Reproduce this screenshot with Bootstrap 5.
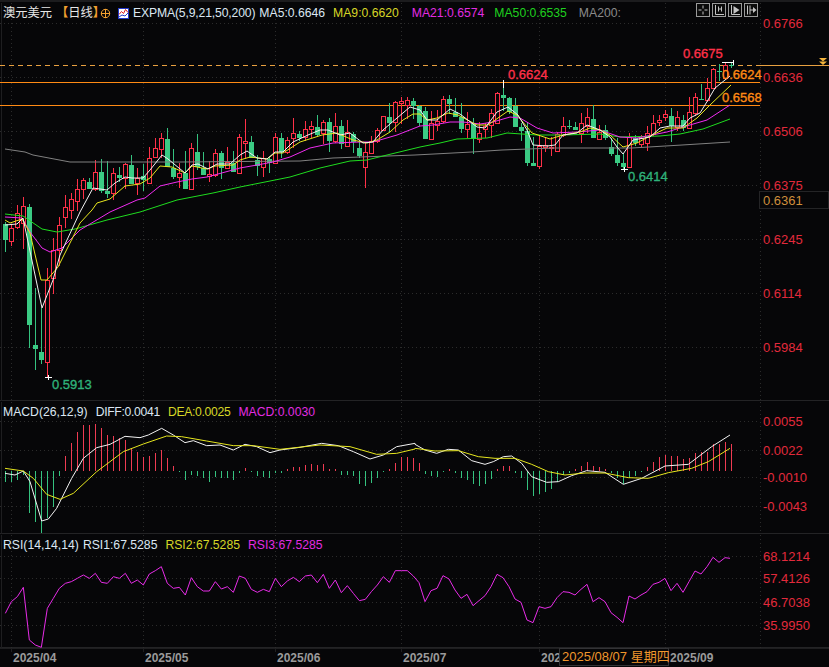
<!DOCTYPE html>
<html lang="zh">
<head>
<meta charset="utf-8">
<title>澳元美元 日线</title>
<link href="https://cdn.jsdelivr.net/npm/bootstrap@5.3.0/dist/css/bootstrap.min.css" rel="stylesheet">
<style>
html,body{margin:0;background:#060608;overflow:hidden}
body{font-family:"Liberation Sans","Noto Sans CJK SC",sans-serif;font-size:12.2px;line-height:1}
.terminal{width:829px;height:667px;background:#060608;color:#d8e4f0}
.pane{border-bottom:1px solid #232325}
.pane-main{height:401px;border-top:2px solid #1c1c1e}
.pane-macd{height:133px}
.pane-rsi{height:114px}
.pane-time{height:19px}
.plot{display:block;position:absolute;left:0;top:0}
.legend-row{position:absolute;left:3px;top:3px;height:16px;white-space:nowrap}
.title-cn{color:#e6e6e6;font-size:12.25px}
.title-bracket{margin-right:-5px;font-weight:700}
.expma-ico{margin-left:7px}
.tight-a{letter-spacing:-.15px}
.tight-b{letter-spacing:-.32px}
.gap-ma21{margin-left:13px}
.gap-ma50{margin-left:10px}
.gap-ma200{margin-left:12px}
.c-orange{color:#f0a030}
.c-white{color:#dbe6f2}
.c-yellow{color:#d6d626}
.c-magenta{color:#e22ce2}
.c-green{color:#1fd01f}
.c-gray{color:#8a8a8a}
.tool-row{position:absolute;left:696px;top:1px;gap:2px}
.tool-ico{display:block;width:14px;height:14px}
.ico-box{fill:#0b0b0b;stroke:#9a9a9a;stroke-width:1}
.ico-ink{fill:none;stroke:#c4c4c4;stroke-width:1}
.ico-fill{fill:#c4c4c4}
.plot text{font-family:"Liberation Sans","Noto Sans CJK SC",sans-serif;font-size:13px}
.ax{fill:#e22a3c}
.lab-red{fill:#ff3048;stroke:#ff3048;stroke-width:.35px}
.lab-org{fill:#ff8a14;stroke:#ff8a14;stroke-width:.35px}
.lab-grn{fill:#2fb27a;stroke:#2fb27a;stroke-width:.35px}
.grid{stroke:#2b2b2b;stroke-width:1;stroke-dasharray:1 3;shape-rendering:crispEdges}
.edge{stroke:#1e1e20;stroke-width:1;shape-rendering:crispEdges}
.hl-solid{stroke:#ff8a14;stroke-width:1;shape-rendering:crispEdges}
.hl-dash{stroke:#e8a040;stroke-width:1;stroke-dasharray:5 4;shape-rendering:crispEdges}
.hl-tail{stroke:#e8a040;stroke-width:1;shape-rendering:crispEdges}
.wick-g{stroke:#35c27f;stroke-width:1;shape-rendering:crispEdges}
.wick-r{stroke:#ff3048;stroke-width:1;shape-rendering:crispEdges}
.body-g{fill:#3bcb84;shape-rendering:crispEdges}
.body-r{fill:#060608;stroke:#ff3048;stroke-width:1;shape-rendering:crispEdges}
.ln{fill:none;stroke-width:1;stroke-linejoin:round}
.ln-w{stroke:#f2f2f2}
.ln-y{stroke:#e6e61e}
.ln-m{stroke:#f02cf0}
.ln-g{stroke:#1fdc1f}
.ln-s{stroke:#808080}
.ln-r{stroke:#e82ce8}
.cross{stroke:#fff;stroke-width:1;shape-rendering:crispEdges}
.bar-g{stroke:#35c27f;stroke-width:1;shape-rendering:crispEdges}
.bar-r{stroke:#ef3b52;stroke-width:1;shape-rendering:crispEdges}
.mark{fill:#f2b33c}
.price-box{fill:#060608;stroke:#242426;shape-rendering:crispEdges}
.price-txt{fill:#cf8f3c}
.plot text.date{fill:#9a9a9a;font-weight:700;font-size:12px}
.date-box{fill:#060608;stroke:#333336;shape-rendering:crispEdges}
.date-cur{fill:#f0962c}
</style>
</head>
<body>
<div class="terminal d-flex flex-column">
  <section class="pane pane-main position-relative">
    <svg class="plot" id="pMain" width="829" height="401" viewBox="0 2 829 401"></svg>
    <div class="legend-row d-flex align-items-center">
      <span class="title-cn">澳元美元</span>
      <span class="title-cn c-orange title-bracket ms-1">【<span class="title-cn fw-normal">日线</span>】</span>
      <svg width="11" height="11" viewBox="0 0 11 11"><circle cx="5.5" cy="5.5" r="4.2" fill="none" stroke="#f0a030"/><path d="M1 5.500h9M5.500 1v9" stroke="#f0a030"/></svg>
      <svg class="expma-ico" width="11" height="11" viewBox="0 0 11 11"><rect x=".5" y=".5" width="10" height="10" fill="#fff" stroke="#2238c8"/><path d="M1 6.500l2.500-3 2 2 2-4 2.500 3" fill="none" stroke="#e02020"/><path d="M1 9l3-2 3 1 3-3" fill="none" stroke="#2238c8"/></svg>
      <span class="c-white tight-a ms-1">EXPMA(5,9,21,50,200)</span>
      <span class="c-white ms-1">MA5:0.6646</span>
      <span class="c-yellow ms-2">MA9:0.6620</span>
      <span class="c-magenta gap-ma21">MA21:0.6574</span>
      <span class="c-green gap-ma50">MA50:0.6535</span>
      <span class="c-gray gap-ma200">MA200:</span>
    </div>
    <div class="tool-row d-flex">
      <svg class="tool-ico" viewBox="0 0 14 14"><rect class="ico-box" x=".5" y=".5" width="13" height="13"/><path class="ico-ink" d="M7 2.500v3M7 8.500v3M2.500 7h3M8.500 7h3"/></svg>
      <svg class="tool-ico" viewBox="0 0 14 14"><rect class="ico-box" x=".5" y=".5" width="13" height="13"/><path class="ico-ink" d="M3.500 2v9.500H12M6.500 3.500v5M9.500 3.500v5M6.500 6h3"/></svg>
      <svg class="tool-ico" viewBox="0 0 14 14"><rect class="ico-box" x=".5" y=".5" width="13" height="13"/><path class="ico-ink" d="M3.500 2v9.500H12"/><path class="ico-fill" d="M5.500 3l6 4-6 4z"/></svg>
      <svg class="tool-ico" viewBox="0 0 14 14"><rect class="ico-box" x=".5" y=".5" width="13" height="13"/><path class="ico-ink" d="M3.500 2.500v9M6 2.500v9M6 7h4"/><path class="ico-fill" d="M9 4l3.500 3L9 10z"/></svg>
    </div>
  </section>
  <section class="pane pane-macd position-relative">
    <svg class="plot" id="pMacd" width="829" height="133" viewBox="0 401 829 133"></svg>
    <div class="legend-row d-flex align-items-center">
      <span class="c-white">MACD(26,12,9)</span>
      <span class="c-white tight-b ms-2">DIFF:0.0041</span>
      <span class="c-yellow tight-b ms-2">DEA:0.0025</span>
      <span class="c-magenta ms-2">MACD:0.0030</span>
    </div>
  </section>
  <section class="pane pane-rsi position-relative">
    <svg class="plot" id="pRsi" width="829" height="114" viewBox="0 534 829 114"></svg>
    <div class="legend-row d-flex align-items-center">
      <span class="c-white">RSI(14,14,14)</span>
      <span class="c-white ms-1">RSI1:67.5285</span>
      <span class="c-yellow ms-2">RSI2:67.5285</span>
      <span class="c-magenta ms-2">RSI3:67.5285</span>
    </div>
  </section>
  <section class="pane-time position-relative">
    <svg class="plot" id="pTime" width="829" height="19" viewBox="0 648 829 19"></svg>
  </section>
</div>
<script>
const NS='http://www.w3.org/2000/svg';
function el(p,t,a,tx){const e=document.createElementNS(NS,t);for(const k in a)e.setAttribute(k,a[k]);if(tx!==undefined)e.textContent=tx;p.appendChild(e);return e}
const line=(p,c,x1,y1,x2,y2)=>el(p,'line',{class:c,x1,y1,x2,y2});
const text=(p,c,x,y,s)=>el(p,'text',{class:c,x,y},s);
const poly=(p,c,pts)=>el(p,'polyline',{class:'ln '+c,points:pts.map(q=>q.join(',')).join(' ')});
const vx=[11.5,143.5,275.5,401.5,539.5,665.5];
const main=document.getElementById('pMain'),macd=document.getElementById('pMacd'),rsi=document.getElementById('pRsi'),tm=document.getElementById('pTime');
function frame(p,top,bot,levels){
  vx.forEach(x=>line(p,'grid',x,top,x,bot));
  line(p,'grid',760.5,top,760.5,bot);
  line(p,'edge',1.5,top,1.5,bot);
  levels.forEach(l=>{line(p,'grid',0,l[1]+.5,760,l[1]+.5);text(p,'ax',763,l[1]+4.5,l[0])});
}
frame(main,3,401,[['0.6766',23],['0.6636',77],['0.6506',131],['0.6375',185],['0.6245',239],['0.6114',293],['0.5984',347]]);
frame(macd,402,534,[['0.0055',421],['0.0022',450],['-0.0010',477],['-0.0043',506]]);
frame(rsi,535,648,[['68.1214',556],['57.4126',578],['46.7038',602],['35.9950',625]]);
/* horizontal levels */
line(main,'hl-dash',0,65.5,760,65.5);line(main,'hl-tail',760,65.5,829,65.5);
line(main,'hl-solid',0,82.5,760,82.5);line(main,'hl-solid',0,105.5,760,105.5);
el(main,'polygon',{class:'mark',points:'819,58 827,58 823,61.500'});
el(main,'polygon',{class:'mark',points:'819,61.500 827,61.500 823,65'});
/* candles: colour, high, body top, body bottom, low */
const K='g222,224,240,251 r224,228,241,245 r205,213,227,228 r197,206,223,248 g204,207,325,347 g288,345,349,369 g308,352,360,363 r268,280,362,377 r238,250,278,293 r217,225,250,265 r195,207,217,227 r193,199,210,218 r179,189,201,210 r178,180,189,198 g178,182,189,189 r160,172,189,190 g159,172,191,192 g161,191,194,197 r168,173,193,199 g167,175,178,181 r163,164,178,188 g155,165,184,184 r168,178,183,194 g164,176,180,190 r147,158,183,183 r138,148,157,157 r133,138,149,157 g128,139,167,167 g149,168,177,178 r163,173,177,187 g151,173,189,189 r143,148,189,189 g134,152,167,169 g152,168,175,175 r161,174,176,181 r149,153,175,176 g151,153,168,178 r147,162,168,168 g151,163,172,172 r134,137,173,173 r119,141,143,158 g136,142,158,158 g155,160,166,175 r151,158,167,176 g157,159,163,172 r133,137,163,163 g133,138,152,157 r137,140,152,153 r118,133,138,147 g131,134,138,140 r121,129,137,140 r121,126,129,137 g115,127,135,136 r120,122,133,143 g118,122,141,151 r113,126,141,142 g120,126,144,148 r120,132,146,146 g132,134,142,152 g142,148,156,157 r142,152,167,187 r136,141,153,153 r128,130,141,142 r116,116,130,130 g103,117,123,131 r101,102,122,131 r97,101,103,123 r97,100,105,118 g98,101,106,118 g105,106,123,125 g107,111,139,139 r111,123,139,139 r110,121,125,130 r96,99,121,122 g95,99,104,113 g98,112,117,117 g103,117,129,132 r112,124,129,137 g118,123,139,153 r122,133,139,142 r123,126,129,137 r109,113,125,137 r92,93,123,123 g80,95,98,110 g97,98,112,113 g98,106,127,127 g123,127,131,140 g122,131,163,165 g137,163,166,166 r136,146,166,168 r137,145,147,151 r137,147,148,155 r132,134,151,151 r117,126,135,136 g120,126,127,128 g122,127,130,130 r113,123,133,142 r108,117,126,132 g105,119,138,138 r125,132,139,139 g125,130,138,139 g138,147,154,155 g138,155,163,165 g153,163,167,169 r133,137,167,167 g135,138,143,145 r135,138,144,146 r126,133,143,150 r115,123,134,135 r115,120,122,125 r110,114,117,120 g108,116,126,141 r111,117,127,130 g115,120,128,130 r97,112,128,128 r93,97,113,115 g84,99,100,100 r78,88,100,101 r68,69,88,88 g64,71,72,80 r62,65,78,79 g62,65,66,67';
K.split(' ').forEach((s,i)=>{
  const c=s[0],[h,t,b,l]=s.slice(1).split(',').map(Number),x=5+6*i;
  if(h<t)line(main,'wick-'+c,x+.5,h,x+.5,t);
  if(l>b)line(main,'wick-'+c,x+.5,b,x+.5,l+1);
  if(c==='g')el(main,'rect',{class:'body-g',x:x-2,y:t,width:5,height:Math.max(b-t,1)});
  else el(main,'rect',{class:'body-r',x:x-1.5,y:t+.5,width:4,height:Math.max(b-t,1)});
});
/* moving averages */
poly(main,'ln-s',[[5,149],[25,152],[33,155],[70,162],[180,162],[300,161],[333,158],[415,155],[472,152],[502,150],[555,148],[632,148],[682,145],[730,142]]);
poly(main,'ln-g',[[5,214],[23,216],[42,229],[57,232],[75,229],[107,220],[140,212],[177,200],[213,193],[240,187],[260,183],[290,177],[320,168],[350,161],[367,160],[387,155],[420,147],[440,143],[457,139],[487,138],[507,133],[537,135],[563,135],[600,134],[620,137],[660,136],[680,134],[703,129],[730,119]]);
poly(main,'ln-m',[[5,217],[22,218],[30,232],[42,248],[50,252],[62,248],[80,230],[110,212],[137,200],[145,198],[160,186],[177,182],[192,179],[207,177],[240,168],[257,165],[273,162],[290,157],[310,148],[333,143],[360,142],[373,142],[397,135],[420,126],[433,125],[450,122],[463,122],[480,124],[493,122],[510,117],[520,118],[537,128],[553,133],[577,132],[600,130],[620,137],[637,138],[667,132],[683,127],[707,120],[730,105]]);
poly(main,'ln-y',[[5,220],[10,223],[22,219],[30,233],[41,280],[47,280],[58,267],[80,223],[92,210],[97,203],[110,199],[125,186],[140,184],[150,178],[160,166],[172,167],[185,173],[192,166],[207,169],[215,166],[233,165],[240,160],[250,157],[267,159],[275,153],[283,153],[300,142],[322,135],[337,133],[353,140],[367,143],[377,140],[390,132],[403,120],[413,114],[420,114],[427,120],[437,118],[448,113],[458,115],[477,125],[488,125],[508,111],[517,115],[532,133],[550,139],[563,135],[580,132],[590,128],[600,130],[610,135],[623,147],[637,143],[650,136],[667,128],[683,128],[697,118],[710,105],[731,85]]);
poly(main,'ln-w',[[5,225],[17,224],[23,218],[42,308],[53,280],[60,255],[80,212],[93,188],[107,190],[115,183],[125,177],[132,178],[143,178],[150,170],[162,155],[168,159],[185,173],[192,165],[198,164],[208,169],[217,164],[230,164],[240,155],[247,151],[257,158],[267,159],[275,152],[283,152],[293,142],[308,135],[320,130],[328,130],[340,135],[350,133],[363,143],[373,142],[383,130],[397,118],[410,107],[420,110],[427,120],[437,120],[450,109],[460,114],[477,127],[485,128],[497,112],[508,107],[518,115],[527,130],[533,145],[547,146],[555,145],[563,135],[577,133],[587,125],[600,130],[610,137],[617,147],[623,154],[633,140],[650,137],[660,128],[670,126],[683,126],[690,118],[700,113],[708,100],[715,88],[730,76]]);
/* extremes and labels */
line(main,'cross',45,377.5,52,377.5);line(main,'cross',48.5,375,48.5,380);
line(main,'cross',621,169.5,628,169.5);line(main,'cross',624.5,167,624.5,172);
line(main,'cross',722,62.5,734,62.5);line(main,'cross',733.5,60,733.5,65);
line(main,'cross',503.5,80,503.5,88);
text(main,'lab-red',683,58,'0.6675');text(main,'lab-red',508,79,'0.6624');
text(main,'lab-org',722,79,'0.6624');text(main,'lab-org',722,102,'0.6568');
text(main,'lab-grn',628,181,'0.6414');text(main,'lab-grn',52,389,'0.5913');
el(main,'rect',{class:'price-box',x:759.5,y:191.5,width:69,height:17});
text(main,'price-txt',763,205,'0.6361');
/* MACD histogram (3x crop units, baseline 228) */
const H=[260,260,255,240,355,380,415,370,335,243,183,143,110,90,90,87,98,120,123,130,135,160,170,185,183,175,165,188,213,232,255,240,242,250,260,247,248,250,255,235,219,232,243,245,250,235,233,222,215,215,210,207,210,207,222,223,240,240,243,268,272,265,250,232,222,203,187,185,190,203,238,243,246,232,222,233,250,255,268,272,268,252,222,212,212,235,250,285,302,297,290,283,262,240,235,222,212,200,212,215,222,235,250,268,250,243,232,215,200,186,180,183,183,192,188,173,172,170,147,147,141,147];
H.forEach((v,i)=>{const x=5.5+6*i,y=Math.round(395+v/3);line(macd,v>228?'bar-g':'bar-r',x,471,x,y)});
const lx=a=>a.map(p=>[p[0]/3,395+p[1]/3]),rx=a=>a.map(p=>[415+p[0]/3,395+p[1]/3]);
poly(macd,'ln-w',lx([[15,235],[45,240],[70,228],[90,260],[125,378],[145,372],[170,340],[215,250],[250,190],[290,158],[330,148],[375,124],[420,128],[445,120],[485,100],[520,120],[555,143],[580,137],[620,152],[660,150],[700,165],[735,148],[770,155],[810,173],[840,165],[900,157],[965,145],[1015,152],[1060,170],[1110,192],[1150,180],[1190,155],[1245,145]]).concat(rx([[0,148],[30,165],[65,175],[100,163],[130,165],[170,197],[210,208],[235,200],[265,185],[290,183],[320,205],[350,245],[395,262],[430,260],[470,242],[515,227],[570,232],[625,268],[680,250],[750,213],[820,208],[890,155],[945,120]])));
poly(macd,'ln-y',lx([[15,220],[70,228],[100,250],[140,298],[180,313],[220,295],[290,230],[370,170],[430,147],[500,123],[545,125],[620,138],[700,152],[760,152],[840,163],[960,150],[1050,155],[1130,178],[1190,175],[1245,162]]).concat(rx([[0,160],[60,168],[130,167],[190,185],[240,190],[300,190],[350,208],[400,230],[450,240],[510,234],[570,234],[640,248],[700,250],[760,233],[830,220],[880,200],[945,160]])));
/* RSI */
const R1=[[16,250],[34,215],[52,200],[70,172],[88,330],[106,345],[124,352],[142,235],[160,205],[178,175],[196,160],[214,155],[232,145],[250,135],[268,145],[286,130],[304,157],[322,160],[340,140],[358,145],[376,130],[394,160],[412,150],[430,165],[448,132],[466,122],[484,110],[502,160],[520,175],[538,172],[556,195],[574,143],[592,170],[610,183],[628,183],[646,155],[664,177],[682,170],[700,187],[718,138],[736,145],[754,178],[772,187],[790,178],[808,185],[826,145],[844,170],[862,153],[880,142],[898,155],[916,138],[934,135],[952,158],[970,133],[988,175],[1006,150],[1024,188],[1042,167],[1060,190],[1078,212],[1096,208],[1114,185],[1132,165],[1150,140],[1168,157],[1186,122],[1204,122],[1222,122],[1240,138]];
const R2=[[12,158],[30,215],[48,182],[66,175],[84,137],[102,147],[120,180],[138,205],[156,193],[174,227],[192,212],[210,197],[228,170],[246,133],[264,143],[282,170],[300,207],[318,217],[336,270],[354,278],[372,230],[390,235],[408,230],[426,203],[444,185],[462,187],[480,195],[498,178],[516,163],[534,215],[552,203],[570,215],[588,248],[606,262],[624,278],[642,198],[660,207],[678,195],[696,185],[714,163],[732,157],[750,145],[768,182],[786,160],[804,187],[822,155],[840,123],[858,132],[876,110],[894,82],[912,97],[930,83],[945,85]];
poly(rsi,'ln-r',R1.map(p=>[p[0]/3,530+p[1]/3]).concat(R2.map(p=>[415+p[0]/3,530+p[1]/3])));
/* time axis */
line(tm,'edge',0,648.5,829,648.5);
[['2025/04',13],['2025/05',145],['2025/06',277],['2025/07',403],['202',541],['2025/09',670]].forEach(d=>{text(tm,'date',d[1],662,d[0]);line(tm,'edge',Math.floor(d[1])-1.5,648,Math.floor(d[1])-1.5,652)});
el(tm,'rect',{class:'date-box',x:559.5,y:648.5,width:109,height:17});
text(tm,'date-cur',562,661,'2025/08/07 星期四');
</script>
<script src="https://cdn.jsdelivr.net/npm/bootstrap@5.3.0/dist/js/bootstrap.bundle.min.js"></script>
</body>
</html>
